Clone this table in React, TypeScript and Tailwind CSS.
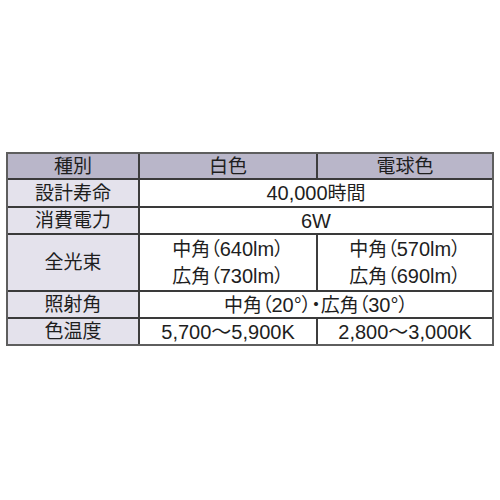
import React from 'react';

const font = { fontFamily: '"Liberation Sans", "Noto Sans CJK JP", sans-serif' };

// latin runs are set a touch larger than the kanji, as in the printed spec sheet
const N: React.FC<{ children: React.ReactNode }> = ({ children }) => (
  <span className="text-[20px]">{children}</span>
);

const Label: React.FC<{ children: React.ReactNode }> = ({ children }) => (
  <div className="flex items-center justify-center bg-[#e4e2ec] border-r-2 border-[#3d3d3d]">
    {children}
  </div>
);

const App: React.FC = () => {
  return (
    <div
      className="w-[500px] h-[500px] bg-white pt-[152px] pl-[6px] text-[19px] leading-none text-[#1e1e1e] [font-feature-settings:'palt']"
      style={font}
    >
      <div className="w-[488px] border-2 border-[#5e5e5e]">
        {/* header */}
        <div className="grid grid-cols-[132px_178px_1fr] h-[26px] bg-[#b9b6c9] border-b-2 border-[#3a3a3a]">
          <div className="flex items-center justify-center border-r-2 border-[#3d3d3d]">種別</div>
          <div className="flex items-center justify-center border-r-2 border-[#3d3d3d]">白色</div>
          <div className="flex items-center justify-center">電球色</div>
        </div>

        <div className="grid grid-cols-[132px_1fr] h-[28px] border-b-2 border-[#3a3a3a]">
          <Label>設計寿命</Label>
          <div className="flex items-center justify-center">
            <N>40,000</N>時間
          </div>
        </div>

        <div className="grid grid-cols-[132px_1fr] h-[27px] border-b-2 border-[#3a3a3a]">
          <Label>消費電力</Label>
          <div className="flex items-center justify-center">
            <N>6W</N>
          </div>
        </div>

        <div className="grid grid-cols-[132px_178px_1fr] h-[57px] border-b-2 border-[#3a3a3a]">
          <Label>全光束</Label>
          <div className="flex flex-col items-center justify-center gap-[7px] border-r-2 border-[#3d3d3d]">
            <span>中角（<N>640lm</N>）</span>
            <span>広角（<N>730lm</N>）</span>
          </div>
          <div className="flex flex-col items-center justify-center gap-[7px]">
            <span>中角（<N>570lm</N>）</span>
            <span>広角（<N>690lm</N>）</span>
          </div>
        </div>

        <div className="grid grid-cols-[132px_1fr] h-[27px] border-b-2 border-[#3a3a3a]">
          <Label>照射角</Label>
          <div className="flex items-center justify-center">
            <span>中角（<N>20°</N>）・広角（<N>30°</N>）</span>
          </div>
        </div>

        <div className="grid grid-cols-[132px_178px_1fr] h-[25px]">
          <Label>色温度</Label>
          <div className="flex items-center justify-center border-r-2 border-[#3d3d3d]">
            <N>5,700～5,900K</N>
          </div>
          <div className="flex items-center justify-center">
            <N>2,800～3,000K</N>
          </div>
        </div>
      </div>
    </div>
  );
};

export default App;
